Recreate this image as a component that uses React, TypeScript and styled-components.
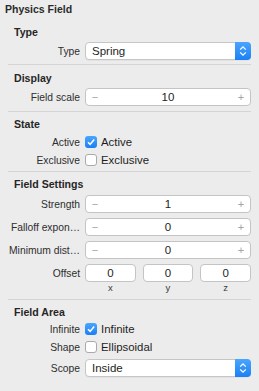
import styled, { createGlobalStyle } from "styled-components";

const GlobalStyle = createGlobalStyle`
  body {
    margin: 0;
    background: #ececec;
    font-family: "Liberation Sans", Arial, sans-serif;
  }
`;

const Panel = styled.div`
  width: 259px;
  height: 391px;
  background: #ececec;
  color: #262626;
  overflow: hidden;
`;

const Title = styled.div`
  height: 18px;
  line-height: 18px;
  padding-left: 5px;
  font-size: 10.5px;
  font-weight: bold;
  color: #2a2a2a;
`;

const Section = styled.section<{ $pt: number; $pb: number; $sep?: boolean }>`
  margin: 0 8px;
  padding: ${(p) => p.$pt}px 0 ${(p) => p.$pb}px;
  border-top: ${(p) => (p.$sep ? "1px solid #d4d4d4" : "none")};
`;

const Header = styled.div`
  height: 14px;
  line-height: 14px;
  padding-left: 6px;
  font-size: 10.6px;
  font-weight: bold;
  color: #262626;
`;

const Row = styled.div<{ $mt?: number; $h?: number }>`
  display: grid;
  grid-template-columns: 72px 1fr;
  column-gap: 5px;
  align-items: center;
  height: ${(p) => p.$h ?? 18}px;
  margin-top: ${(p) => p.$mt ?? 0}px;
`;

const Label = styled.div`
  text-align: right;
  font-size: 10.3px;
  white-space: nowrap;
  color: #2e2e2e;
`;

const Popup = styled.div`
  display: flex;
  align-items: center;
  height: 18px;
  box-sizing: border-box;
  background: #fff;
  border: 1px solid #c6c6c6;
  border-radius: 4px;
  box-shadow: 0 1px 0 rgba(0, 0, 0, 0.04);
  padding-left: 6px;
  font-size: 11.5px;
  color: #1e1e1e;
`;

const PopupArrow = styled.div`
  align-self: stretch;
  margin: -1px -1px -1px auto;
  width: 16px;
  border-radius: 0 4px 4px 0;
  background: linear-gradient(#4aa5fd, #1b80f6);
  display: flex;
  align-items: center;
  justify-content: center;
`;

const Stepper = styled.div`
  display: grid;
  grid-template-columns: 18px 1fr 18px;
  align-items: center;
  height: 18px;
  box-sizing: border-box;
  background: #fff;
  border: 1px solid #c4c4c4;
  border-radius: 4px;
  font-size: 11.5px;
  color: #1e1e1e;
`;

const StepSign = styled.span`
  text-align: center;
  font-size: 11px;
  color: #a3a3a3;
`;

const StepValue = styled.span`
  text-align: center;
`;

const Vector = styled.div`
  display: grid;
  grid-template-columns: repeat(3, 1fr);
  column-gap: 7px;
`;

const VectorField = styled.div`
  height: 18px;
  box-sizing: border-box;
  line-height: 16px;
  text-align: center;
  background: #fff;
  border: 1px solid #c4c4c4;
  border-radius: 4px;
  font-size: 11.5px;
  color: #1e1e1e;
`;

const AxisLabel = styled.div`
  text-align: center;
  font-size: 9.5px;
  line-height: 10px;
  color: #3a3a3a;
`;

const Check = styled.label`
  display: flex;
  align-items: center;
  gap: 4px;
  font-size: 11.4px;
  color: #1e1e1e;
`;

const Box = styled.span<{ $on?: boolean }>`
  display: flex;
  align-items: center;
  justify-content: center;
  width: 12px;
  height: 12px;
  box-sizing: border-box;
  border-radius: 3px;
  background: ${(p) => (p.$on ? "linear-gradient(#4aa5fd, #1b80f6)" : "#fff")};
  border: ${(p) => (p.$on ? "none" : "1px solid #aaaaaa")};
`;

const Chevrons = () => (
  <svg width="16" height="18" viewBox="0 0 16 18">
    <path d="M5.2 7.6 L8 4.8 L10.8 7.6" fill="none" stroke="#fff" strokeWidth="1.3" />
    <path d="M5.2 10.4 L8 13.2 L10.8 10.4" fill="none" stroke="#fff" strokeWidth="1.3" />
  </svg>
);

const Tick = () => (
  <svg width="12" height="12" viewBox="0 0 12 12">
    <path d="M3 6.3 L5.1 8.4 L9.2 3.4" fill="none" stroke="#fff" strokeWidth="1.6" />
  </svg>
);

const PopupField = ({ value }: { value: string }) => (
  <Popup>
    {value}
    <PopupArrow>
      <Chevrons />
    </PopupArrow>
  </Popup>
);

const StepperField = ({ value }: { value: string }) => (
  <Stepper>
    <StepSign>−</StepSign>
    <StepValue>{value}</StepValue>
    <StepSign>+</StepSign>
  </Stepper>
);

const Checkbox = ({ on, text }: { on?: boolean; text: string }) => (
  <Check>
    <Box $on={on}>{on && <Tick />}</Box>
    {text}
  </Check>
);

const App = () => {
  return (
    <Panel>
      <GlobalStyle />
      <Title>Physics Field</Title>

      <Section $pt={7} $pb={4}>
        <Header>Type</Header>
        <Row $mt={3}>
          <Label>Type</Label>
          <PopupField value="Spring" />
        </Row>
      </Section>

      <Section $sep $pt={6} $pb={5}>
        <Header>Display</Header>
        <Row $mt={3}>
          <Label>Field scale</Label>
          <StepperField value="10" />
        </Row>
      </Section>

      <Section $sep $pt={5} $pb={2}>
        <Header>State</Header>
        <Row $mt={2}>
          <Label>Active</Label>
          <Checkbox on text="Active" />
        </Row>
        <Row>
          <Label>Exclusive</Label>
          <Checkbox text="Exclusive" />
        </Row>
      </Section>

      <Section $sep $pt={5} $pb={6}>
        <Header>Field Settings</Header>
        <Row $mt={4}>
          <Label>Strength</Label>
          <StepperField value="1" />
        </Row>
        <Row $mt={5}>
          <Label>Falloff expon…</Label>
          <StepperField value="0" />
        </Row>
        <Row $mt={5}>
          <Label>Minimum dist…</Label>
          <StepperField value="0" />
        </Row>
        <Row $mt={5}>
          <Label>Offset</Label>
          <Vector>
            <VectorField>0</VectorField>
            <VectorField>0</VectorField>
            <VectorField>0</VectorField>
          </Vector>
        </Row>
        <Row $mt={1} $h={10}>
          <span />
          <Vector>
            <AxisLabel>x</AxisLabel>
            <AxisLabel>y</AxisLabel>
            <AxisLabel>z</AxisLabel>
          </Vector>
        </Row>
      </Section>

      <Section $sep $pt={5} $pb={0}>
        <Header>Field Area</Header>
        <Row $mt={1}>
          <Label>Infinite</Label>
          <Checkbox on text="Infinite" />
        </Row>
        <Row>
          <Label>Shape</Label>
          <Checkbox text="Ellipsoidal" />
        </Row>
        <Row $mt={3}>
          <Label>Scope</Label>
          <PopupField value="Inside" />
        </Row>
      </Section>
    </Panel>
  );
};

export default App;
